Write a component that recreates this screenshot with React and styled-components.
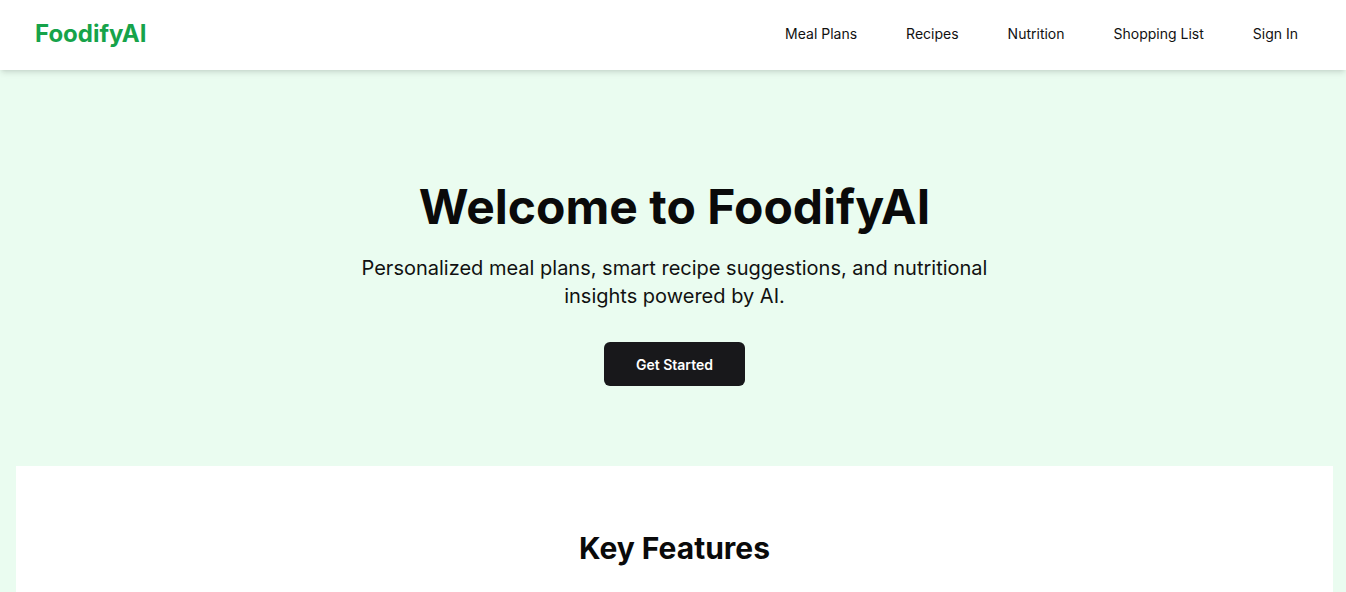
import styled, { createGlobalStyle } from 'styled-components';

const GlobalStyle = createGlobalStyle`
  * { box-sizing: border-box; }
  body {
    margin: 0;
    font-family: Inter, "Noto Sans", sans-serif;
    background: #eafcf0;
    color: #0a0a0a;
  }
`;

const navLinks = ['Meal Plans', 'Recipes', 'Nutrition', 'Shopping List', 'Sign In'];

const App = () => {
  return (
    <>
      <GlobalStyle />
      <Header>
        <Logo>FoodifyAI</Logo>
        <Nav>
          {navLinks.map((link) => (
            <NavLink key={link} href="#">{link}</NavLink>
          ))}
        </Nav>
      </Header>

      <Hero>
        <Title>Welcome to FoodifyAI</Title>
        <Subtitle>
          Personalized meal plans, smart recipe suggestions, and nutritional insights powered by AI.
        </Subtitle>
        <PrimaryButton>Get Started</PrimaryButton>
      </Hero>

      <FeaturesWrap>
        <Features>
          <SectionTitle>Key Features</SectionTitle>
        </Features>
      </FeaturesWrap>
    </>
  );
};

export default App;

const Header = styled.header`
  display: flex;
  align-items: center;
  justify-content: space-between;
  height: 70px;
  padding: 0 32px 2px 35px;
  background: #fff;
  box-shadow: 0 4px 6px -1px rgba(0, 0, 0, 0.1), 0 2px 4px -2px rgba(0, 0, 0, 0.1);
  position: relative;
  z-index: 1;
`;

const Logo = styled.div`
  font-size: 24px;
  font-weight: 700;
  color: #16a34a;
  line-height: 32px;
`;

const Nav = styled.nav`
  display: flex;
  gap: 17px;
`;

const NavLink = styled.a`
  padding: 8px 16px;
  font-size: 14px;
  line-height: 20px;
  color: #111;
  text-decoration: none;
`;

const Hero = styled.section`
  display: flex;
  flex-direction: column;
  align-items: center;
  text-align: center;
  padding: 113px 14px 80px 17px;
`;

const Title = styled.h1`
  margin: 0 0 23px;
  font-size: 48px;
  line-height: 48px;
  font-weight: 700;
`;

const Subtitle = styled.p`
  margin: 0 0 32px;
  max-width: 672px;
  font-size: 20px;
  line-height: 28px;
  color: #111;
`;

const PrimaryButton = styled.button`
  height: 44px;
  padding: 0 32px;
  border: none;
  border-radius: 6px;
  background: #18181b;
  color: #fff;
  font-family: inherit;
  font-size: 14px;
  font-weight: 600;
  cursor: pointer;
`;

const FeaturesWrap = styled.div`
  padding: 0 13px 0 16px;
`;

const Features = styled.section`
  background: #fff;
  padding: 64px 16px 40px;
  min-height: 200px;
`;

const SectionTitle = styled.h2`
  margin: 0;
  text-align: center;
  font-size: 30px;
  line-height: 36px;
  font-weight: 700;
`;
